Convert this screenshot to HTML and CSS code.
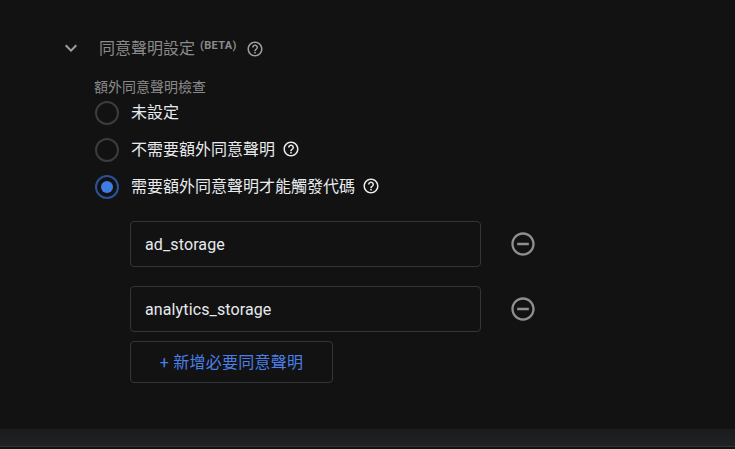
FILE: index.html
```html
<!DOCTYPE html>
<html lang="zh-Hant">
<head>
<meta charset="utf-8">
<title>同意聲明設定</title>
<link rel="stylesheet" href="styles.css">
</head>
<body>
<main class="panel">
  <header class="section-head">
    <svg class="chevron" viewBox="0 0 24 24" width="24" height="24"><path d="M7.41 8.59 12 13.17l4.59-4.58L18 10l-6 6-6-6z"/></svg>
    <h2 class="section-title">同意聲明設定 <sup class="beta">(BETA)</sup></h2>
    <svg class="help help-head" viewBox="0 0 24 24" width="18" height="18"><path d="M11 18h2v-2h-2v2zm1-16C6.48 2 2 6.48 2 12s4.48 10 10 10 10-4.48 10-10S17.52 2 12 2zm0 18c-4.41 0-8-3.59-8-8s3.59-8 8-8 8 3.59 8 8-3.59 8-8 8zm0-14c-2.21 0-4 1.79-4 4h2c0-1.1.9-2 2-2s2 .9 2 2c0 2-3 1.75-3 5h2c0-2.25 3-2.5 3-5 0-2.21-1.79-4-4-4z"/></svg>
  </header>
  <div class="group-label">額外同意聲明檢查</div>
  <div class="radios">
    <div class="radio-row"><span class="radio"></span><span class="radio-text">未設定</span></div>
    <div class="radio-row"><span class="radio"></span><span class="radio-text">不需要額外同意聲明</span>
      <svg class="help" viewBox="0 0 24 24" width="18" height="18"><path d="M11 18h2v-2h-2v2zm1-16C6.48 2 2 6.48 2 12s4.48 10 10 10 10-4.48 10-10S17.52 2 12 2zm0 18c-4.41 0-8-3.59-8-8s3.59-8 8-8 8 3.59 8 8-3.59 8-8 8zm0-14c-2.21 0-4 1.79-4 4h2c0-1.1.9-2 2-2s2 .9 2 2c0 2-3 1.75-3 5h2c0-2.25 3-2.5 3-5 0-2.21-1.79-4-4-4z"/></svg>
    </div>
    <div class="radio-row"><span class="radio radio-on"></span><span class="radio-text">需要額外同意聲明才能觸發代碼</span>
      <svg class="help" viewBox="0 0 24 24" width="18" height="18"><path d="M11 18h2v-2h-2v2zm1-16C6.48 2 2 6.48 2 12s4.48 10 10 10 10-4.48 10-10S17.52 2 12 2zm0 18c-4.41 0-8-3.59-8-8s3.59-8 8-8 8 3.59 8 8-3.59 8-8 8zm0-14c-2.21 0-4 1.79-4 4h2c0-1.1.9-2 2-2s2 .9 2 2c0 2-3 1.75-3 5h2c0-2.25 3-2.5 3-5 0-2.21-1.79-4-4-4z"/></svg>
    </div>
  </div>
  <div class="consents">
    <div class="consent-row">
      <div class="field">ad_storage</div>
      <svg class="remove" viewBox="0 0 24 24" width="28" height="28"><path d="M7 11v2h10v-2H7zm5-9C6.48 2 2 6.48 2 12s4.48 10 10 10 10-4.48 10-10S17.52 2 12 2zm0 18c-4.41 0-8-3.59-8-8s3.59-8 8-8 8 3.59 8 8-3.59 8-8 8z"/></svg>
    </div>
    <div class="consent-row">
      <div class="field">analytics_storage</div>
      <svg class="remove" viewBox="0 0 24 24" width="28" height="28"><path d="M7 11v2h10v-2H7zm5-9C6.48 2 2 6.48 2 12s4.48 10 10 10 10-4.48 10-10S17.52 2 12 2zm0 18c-4.41 0-8-3.59-8-8s3.59-8 8-8 8 3.59 8 8-3.59 8-8 8z"/></svg>
    </div>
    <button class="add-btn" type="button">+ 新增必要同意聲明</button>
  </div>
</main>
<footer class="bottom-bar"></footer>
</body>
</html>
```
FILE: styles.css
```css
* { box-sizing: border-box; }
html, body { margin: 0; height: 100%; }
body {
  width: 735px;
  height: 449px;
  overflow: hidden;
  background: #121212;
  color: #e8eaed;
  font-family: Roboto, "Noto Sans CJK TC", sans-serif;
  display: flex;
  flex-direction: column;
}
.panel { flex: 0 0 429px; padding: 36px 0 0 59px; }
.section-head { display: flex; align-items: center; height: 24px; }
.chevron { fill: #9aa0a6; flex: none; }
.section-title {
  margin: 2px 0 0 16px;
  font-size: 16px;
  font-weight: 400;
  line-height: 24px;
  color: #8a8a8a;
  white-space: nowrap;
}
.beta { font-size: 11px; font-weight: 700; line-height: 0; vertical-align: 5px; letter-spacing: .35px; margin-left: 1px; }
.help { fill: #e8eaed; flex: none; margin-left: 6.5px; }
.radio-row .help { margin-top: -2px; }
.help-head { fill: #9aa0a6; margin: 2px 0 0 9px; }
.group-label {
  margin: 17px 0 0 35px;
  font-size: 14px;
  line-height: 20px;
  color: #8a8a8a;
}
.radios { margin: 4px 0 0 36px; display: flex; flex-direction: column; gap: 13px; }
.radio-row { display: flex; align-items: center; height: 24px; }
.radio {
  width: 24px;
  height: 24px;
  border: 2px solid #3c3c3c;
  border-radius: 50%;
  flex: none;
  margin-right: 12px;
  display: flex;
  align-items: center;
  justify-content: center;
}
.radio-on { border-color: #2a5298; }
.radio-on::after { content: ""; width: 12px; height: 12px; border-radius: 50%; background: #3f7de0; }
.radio-text { font-size: 16px; line-height: 24px; color: #e8eaed; white-space: nowrap; }
.consents { margin: 22px 0 0 71px; display: flex; flex-direction: column; align-items: flex-start; }
.consent-row { display: flex; align-items: center; margin-bottom: 19px; }
.consent-row:nth-child(2) { margin-bottom: 9px; }
.field {
  width: 351px;
  height: 46px;
  border: 1px solid #333537;
  border-radius: 4px;
  padding: 1px 14px 0;
  font-size: 16px;
  line-height: 44px;
  letter-spacing: .12px;
  color: #e8eaed;
}
.remove { fill: #8f8f8f; margin-left: 28px; flex: none; }
.add-btn {
  width: 203px;
  height: 42px;
  background: transparent;
  border: 1px solid #333537;
  border-radius: 4px;
  color: #4a7fe8;
  font: 400 16px/38px Roboto, "Noto Sans CJK TC", sans-serif;
  padding: 2px 0 0;
  letter-spacing: .25px;
}
.bottom-bar {
  flex: 0 0 20px;
  background: linear-gradient(#1b1c1e, #202124 85%, #333 85%, #333 90%, #121212 90%);
}
```
